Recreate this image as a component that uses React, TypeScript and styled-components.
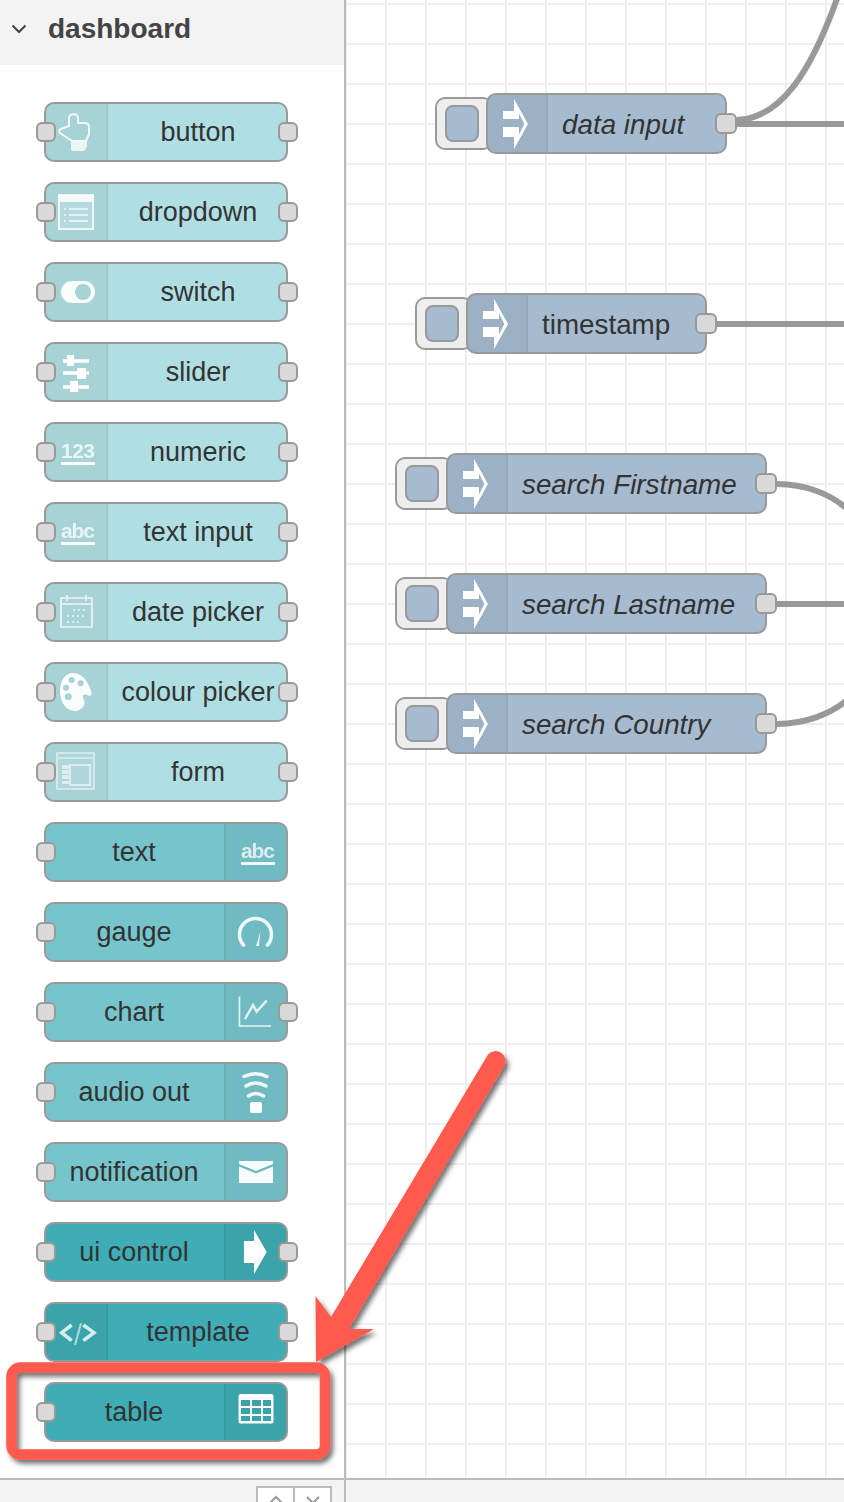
import React from 'react';
import styled, { createGlobalStyle } from 'styled-components';

const GlobalStyle = createGlobalStyle`
    html, body {
        margin: 0;
        padding: 0;
        background: #fff;
    }
    body {
        font-family: "Liberation Sans", Arial, sans-serif;
        color: #333;
    }
`

const Page = styled.div`
    position: relative;
    width: 844px;
    height: 1502px;
    display: flex;
    overflow: hidden;
`

const Sidebar = styled.aside`
    width: 346px;
    height: 100%;
    flex-shrink: 0;
    box-sizing: border-box;
    border-right: 2px solid #bbb;
    display: flex;
    flex-direction: column;
`

const CategoryHeader = styled.div`
    height: 65px;
    flex-shrink: 0;
    background: #f3f3f3;
    display: flex;
    align-items: center;
    gap: 20px;
    padding: 0 0 8px 10px;
    box-sizing: border-box;
    font-size: 28px;
    font-weight: 700;
    color: #444;
`

const Palette = styled.div`
    flex: 1;
    display: flex;
    flex-direction: column;
    gap: 20px;
    padding: 37px 0 0 44px;
`

const Tones: Record<string, string> = {
    light: '#b0dfe3',
    mid: '#77c5cc',
    dark: '#3fadb5',
    inject: '#a6bbcf',
}

const PaletteNode = styled.div<{ $tone: string; $iconRight?: boolean }>`
    position: relative;
    width: 244px;
    height: 60px;
    box-sizing: border-box;
    border: 2px solid #999;
    border-radius: 10px;
    background: ${p => Tones[p.$tone]};
    display: flex;
    flex-direction: ${p => (p.$iconRight ? 'row-reverse' : 'row')};
`

const IconCell = styled.div<{ $right?: boolean }>`
    width: 62px;
    flex-shrink: 0;
    box-sizing: border-box;
    background: rgba(0, 0, 0, 0.05);
    border-${p => (p.$right ? 'left' : 'right')}: 2px solid rgba(0, 0, 0, 0.05);
    border-radius: ${p => (p.$right ? '0 8px 8px 0' : '8px 0 0 8px')};
    display: flex;
    align-items: center;
    justify-content: center;
`

const FlowIconCell = styled(IconCell)`
    width: 60px;
`

const NodeLabel = styled.div<{ $iconRight?: boolean }>`
    flex: 1;
    text-align: center;
    font-size: 27px;
    line-height: 57px;
    white-space: nowrap;
    color: #333;
    padding-${p => (p.$iconRight ? 'right' : 'left')}: 2px;
`

const Port = styled.div<{ $side: 'left' | 'right' }>`
    position: absolute;
    top: 18px;
    ${p => p.$side}: ${p => (p.$side === 'left' ? -10 : -12)}px;
    width: 20px;
    height: 20px;
    box-sizing: border-box;
    border: 2px solid #999;
    border-radius: 6px;
    background: #d9d9d9;
`

const Footer = styled.div`
    height: 24px;
    flex-shrink: 0;
    box-sizing: border-box;
    border-top: 2px solid #bbb;
    background: #f3f3f3;
`

const SidebarFooter = styled(Footer)`
    display: flex;
    justify-content: flex-end;
    padding: 6px 12px 0 0;
`

const FooterButton = styled.div`
    width: 39px;
    height: 30px;
    box-sizing: border-box;
    border: 2px solid #bbb;
    background: #fff;
    margin-left: -2px;
    display: flex;
    justify-content: center;
    padding-top: 7px;
`

const Canvas = styled.main`
    position: relative;
    flex: 1;
    display: flex;
    flex-direction: column;
`

const Grid = styled.div`
    position: relative;
    isolation: isolate;
    flex: 1;
    background-color: #fff;
    background-image:
        linear-gradient(#eee 2px, transparent 2px),
        linear-gradient(90deg, #eee 2px, transparent 2px);
    background-size: 40px 40px;
    background-position: 39px 3px;
`

const WireLayer = styled.svg`
    position: absolute;
    left: 0;
    top: 0;
`

const FlowNode = styled.div<{ $x: number; $y: number; $w: number }>`
    position: absolute;
    left: ${p => p.$x}px;
    top: ${p => p.$y}px;
    width: ${p => p.$w}px;
    height: 61px;
    box-sizing: border-box;
    border: 2px solid #999;
    border-radius: 10px;
    background: ${Tones.inject};
    display: flex;
`

const FlowLabel = styled.div<{ $italic?: boolean }>`
    padding-left: 14px;
    font-size: 27.8px;
    font-style: ${p => (p.$italic ? 'italic' : 'normal')};
    line-height: 60px;
    white-space: nowrap;
    color: #333;
`

const InjectButton = styled.div`
    position: absolute;
    left: -53px;
    top: 2px;
    width: 58px;
    height: 53px;
    box-sizing: border-box;
    border: 2px solid #999;
    border-radius: 10px;
    background: #eee;
    z-index: -1;
    padding: 6px 0 0 8px;
`

const InjectSquare = styled.div`
    width: 34px;
    height: 37px;
    box-sizing: border-box;
    border: 2px solid #999;
    border-radius: 8px;
    background: ${Tones.inject};
`

const FlowPort = styled(Port)`
    top: 18px;
    right: -12px;
    width: 22px;
    height: 21px;
`

const AnnotationLayer = styled.svg`
    position: absolute;
    left: 0;
    top: 0;
    pointer-events: none;
`

const Chevron = () => (
    <svg width="18" height="12" viewBox="0 0 18 12">
        <path d="M2.5 2.5 L9 9 L15.5 2.5" fill="none" stroke="#444" strokeWidth="2" />
    </svg>
)

const Svg = ({ children }: { children: React.ReactNode }) => (
    <svg width="44" height="44" viewBox="0 0 44 44" fill="none" stroke="#fff" strokeWidth="2">
        {children}
    </svg>
)

const HandIcon = () => (
    <Svg>
        <path opacity=".85" strokeLinejoin="round" d="M15 8c0-5 9-5 9 0v5h7c3 0 4 1.500 4 4v7l-3 7H18L6 23c-1.500-1.500-1-3 1-4l8-3V8Z" />
        <path d="M17 32h16v5l-3 4H19c-1.500 0-2-1-2-2v-7Z" fill="#fff" opacity=".8" stroke="none" />
    </Svg>
)

const ListIcon = () => (
    <Svg>
        <path d="M5 5h34v34H5Z" fill="#fff" fillOpacity=".2" opacity=".8" />
        <path d="M5 5h34v7H5Z" fill="#fff" stroke="none" opacity=".85" />
        <path d="M10 19h2m3 0h19M10 25h2m3 0h19M10 31h2m3 0h19" strokeWidth="1.600" opacity=".85" />
    </Svg>
)

const SwitchIcon = () => (
    <Svg>
        <path fillRule="evenodd" stroke="none" fill="#fff" opacity=".95" d="M18 11h12a11 11 0 0 1 0 22H18a11 11 0 0 1 0-22ZM29 14a8 8 0 1 0 0 16a8 8 0 0 0 0-16Z" />
    </Svg>
)

const SliderIcon = () => (
    <Svg>
        <path d="M9 11h26M9 23h26M9 37h26" strokeWidth="3.500" />
        <path d="M13 5h7v11h-7ZM23 18h9v11h-9ZM16 31h8v11h-8Z" fill="#fff" stroke="none" />
    </Svg>
)

const GlyphText = styled.text`
    font-family: "Liberation Sans", Arial, sans-serif;
    font-weight: 700;
    font-size: 21px;
    fill: #fff;
    stroke: none;
`

const UnderlinedIcon = ({ text }: { text: string }) => (
    <Svg>
        <GlyphText x="24" y="28" textAnchor="middle" opacity=".75" textLength="34">{text}</GlyphText>
        <path d="M7 33.500h34" strokeWidth="3" opacity=".9" />
    </Svg>
)

const CalendarIcon = () => (
    <Svg>
        <g opacity=".8">
            <path d="M7 8h31v29H7ZM7 14h31M13 5v6M32 5v6" strokeWidth="1.600" />
            <path d="M19 20h2m3 0h2m3 0h2M13 26h2m3 0h2m3 0h2m3 0h2M13 32h2m3 0h2m3 0h2" strokeWidth="1.600" />
        </g>
    </Svg>
)

const PaletteIcon = () => (
    <Svg>
        <path stroke="none" fill="#fff" opacity=".95" fillRule="evenodd" d="M19 3C29 3 35 13 37.500 23 38 26 35 26.500 33 25 30 23 28 26 29.500 29 31 32 31 34 29 37 26 41 22 41.500 18 40.500 10 38.500 6 30 6 21 6 11 11 3 19 3ZM17.700 7a3 3 0 1 0 0 6a3 3 0 0 0 0-6ZM26.700 10.300a3 3 0 1 0 0 6a3 3 0 0 0 0-6ZM12 14.700a3 3 0 1 0 0 6a3 3 0 0 0 0-6ZM14.300 23.200a3.500 3.500 0 1 0 0 7a3.500 3.500 0 0 0 0-7Z" />
    </Svg>
)

const FormIcon = () => (
    <Svg>
        <g opacity=".6">
            <path d="M3 3h37v36H3ZM3 8h37" strokeWidth="1.600" fill="#fff" fillOpacity=".15" />
            <path d="M16 15h20v20H16Z" strokeWidth="2" />
            <path d="M8 15h7v4H8ZM8 20h7v4H8ZM8 25h7v4H8ZM8 31h7v3H8Z" fill="#fff" stroke="none" />
        </g>
    </Svg>
)

const GaugeIcon = () => (
    <Svg>
        <path d="M9.500 35a16 16 0 1 1 24 0" strokeWidth="3.500" strokeLinecap="round" opacity=".9" />
        <path d="M26.500 21 22 36h3Z" fill="#fff" stroke="none" opacity=".85" />
    </Svg>
)

const ChartIcon = () => (
    <Svg>
        <path d="M5.500 6.500V36H37" strokeWidth="1.600" opacity=".85" />
        <path d="M11 29l8-14 3.700 6.700 10-11" strokeWidth="2.500" opacity=".8" />
    </Svg>
)

const AudioIcon = () => (
    <Svg>
        <path d="M10 6.500Q21.500 1 33 6.500M12 16Q21.500 10 32 16M14.500 26Q21.500 21 29.500 26" strokeWidth="3.500" strokeLinecap="round" opacity=".9" />
        <rect x="16" y="32" width="12" height="11" rx="2" fill="#fff" stroke="none" />
    </Svg>
)

const MailIcon = () => (
    <Svg>
        <path stroke="none" fill="#fff" opacity=".95" d="M5 11h34v3L22 21 5 14ZM5 16.500l17 7 17-7V33H5Z" />
    </Svg>
)

const ArrowIcon = () => (
    <Svg>
        <path stroke="none" fill="#fff" d="M10 11H20V0L32.700 22 20 44V33H10Z" />
    </Svg>
)

const CodeIcon = () => (
    <Svg>
        <path d="M17.700 15 7.700 22.700l10 8M29.300 15 40 22.700l-10.700 8" strokeWidth="3.500" opacity=".8" />
        <path d="M27 13.300 21 35" strokeWidth="2" opacity=".6" />
    </Svg>
)

const TableIcon = () => (
    <Svg>
        <path stroke="none" fill="#fff" fillRule="evenodd" d="M6.500 4h31a2 2 0 0 1 2 2v25.500a2 2 0 0 1-2 2h-31a2 2 0 0 1-2-2V6a2 2 0 0 1 2-2ZM7 10v6h9v-6ZM18 10v6h9v-6ZM29 10v6h8v-6ZM7 18v6h9v-6ZM18 18v6h9v-6ZM29 18v6h8v-6ZM7 26v5h9v-5ZM18 26v5h9v-5ZM29 26v5h8v-5Z" />
    </Svg>
)

const InjectIcon = () => (
    <svg width="30" height="56" viewBox="0 0 30 56">
        <path fill="#fff" d="M1 15H12V3L26 28 12 53V41H1V31H17V38.500L22.300 28 17 17.500V23H1Z" />
    </svg>
)

const paletteNodes = [
    { label: 'button', tone: 'light', icon: <HandIcon />, input: true, output: true },
    { label: 'dropdown', tone: 'light', icon: <ListIcon />, input: true, output: true },
    { label: 'switch', tone: 'light', icon: <SwitchIcon />, input: true, output: true },
    { label: 'slider', tone: 'light', icon: <SliderIcon />, input: true, output: true },
    { label: 'numeric', tone: 'light', icon: <UnderlinedIcon text="123" />, input: true, output: true },
    { label: 'text input', tone: 'light', icon: <UnderlinedIcon text="abc" />, input: true, output: true },
    { label: 'date picker', tone: 'light', icon: <CalendarIcon />, input: true, output: true },
    { label: 'colour picker', tone: 'light', icon: <PaletteIcon />, input: true, output: true },
    { label: 'form', tone: 'light', icon: <FormIcon />, input: true, output: true },
    { label: 'text', tone: 'mid', icon: <UnderlinedIcon text="abc" />, input: true, iconRight: true },
    { label: 'gauge', tone: 'mid', icon: <GaugeIcon />, input: true, iconRight: true },
    { label: 'chart', tone: 'mid', icon: <ChartIcon />, input: true, output: true, iconRight: true },
    { label: 'audio out', tone: 'mid', icon: <AudioIcon />, input: true, iconRight: true },
    { label: 'notification', tone: 'mid', icon: <MailIcon />, input: true, iconRight: true },
    { label: 'ui control', tone: 'dark', icon: <ArrowIcon />, input: true, output: true, iconRight: true },
    { label: 'template', tone: 'dark', icon: <CodeIcon />, input: true, output: true },
    { label: 'table', tone: 'dark', icon: <TableIcon />, input: true, iconRight: true },
]

const flowNodes = [
    { label: 'data input', x: 140, y: 93, w: 241, italic: true },
    { label: 'timestamp', x: 120, y: 293, w: 241 },
    { label: 'search Firstname', x: 100, y: 453, w: 321, italic: true },
    { label: 'search Lastname', x: 100, y: 573, w: 321, italic: true },
    { label: 'search Country', x: 100, y: 693, w: 321, italic: true },
]

const App = () => {
    return (
        <Page>
            <GlobalStyle />
            <Sidebar>
                <CategoryHeader>
                    <Chevron />
                    <span>dashboard</span>
                </CategoryHeader>
                <Palette>
                    {paletteNodes.map(node => (
                        <PaletteNode key={node.label} $tone={node.tone} $iconRight={node.iconRight}>
                            <IconCell $right={node.iconRight}>{node.icon}</IconCell>
                            <NodeLabel $iconRight={node.iconRight}>{node.label}</NodeLabel>
                            {node.input && <Port $side="left" />}
                            {node.output && <Port $side="right" />}
                        </PaletteNode>
                    ))}
                </Palette>
                <SidebarFooter>
                    <FooterButton>
                        <svg width="16" height="10" viewBox="0 0 16 10"><path d="M2 8 8 2l6 6" fill="none" stroke="#999" strokeWidth="2" /></svg>
                    </FooterButton>
                    <FooterButton>
                        <svg width="16" height="10" viewBox="0 0 16 10"><path d="M2 2l6 6 6-6" fill="none" stroke="#999" strokeWidth="2" /></svg>
                    </FooterButton>
                </SidebarFooter>
            </Sidebar>
            <Canvas>
                <Grid>
                    <WireLayer width="498" height="1478" viewBox="346 0 498 1478" fill="none" stroke="#999" strokeWidth="6">
                        <path d="M737 124H844" />
                        <path d="M737 120C780 118 810 75 838 -4" />
                        <path d="M717 324H844" />
                        <path d="M777 484C805 484 830 494 846 508" />
                        <path d="M777 604H844" />
                        <path d="M777 724C805 724 830 714 846 701" />
                    </WireLayer>
                    {flowNodes.map(node => (
                        <FlowNode key={node.label} $x={node.x} $y={node.y} $w={node.w}>
                            <InjectButton><InjectSquare /></InjectButton>
                            <FlowIconCell>
                                <InjectIcon />
                            </FlowIconCell>
                            <FlowLabel $italic={node.italic}>{node.label}</FlowLabel>
                            <FlowPort $side="right" />
                        </FlowNode>
                    ))}
                </Grid>
                <Footer />
            </Canvas>
            <AnnotationLayer width="844" height="1502" viewBox="0 0 844 1502">
                <defs>
                    <filter id="callout-shadow" x="-20%" y="-20%" width="140%" height="140%">
                        <feDropShadow dx="3" dy="4" stdDeviation="2.500" floodColor="#000" floodOpacity="0.55" />
                    </filter>
                </defs>
                <g filter="url(#callout-shadow)" fill="#ff5a4d">
                    <rect x="11.500" y="1367.500" width="313.500" height="87" rx="9" fill="none" stroke="#ff5a4d" strokeWidth="10.500" />
                    <path d="M488 1054.500a10 10 0 0 1 16.500 11L349 1329l25 0-58 33-.5-66 15.500 21Z" />
                </g>
            </AnnotationLayer>
        </Page>
    );
}

export default App;
